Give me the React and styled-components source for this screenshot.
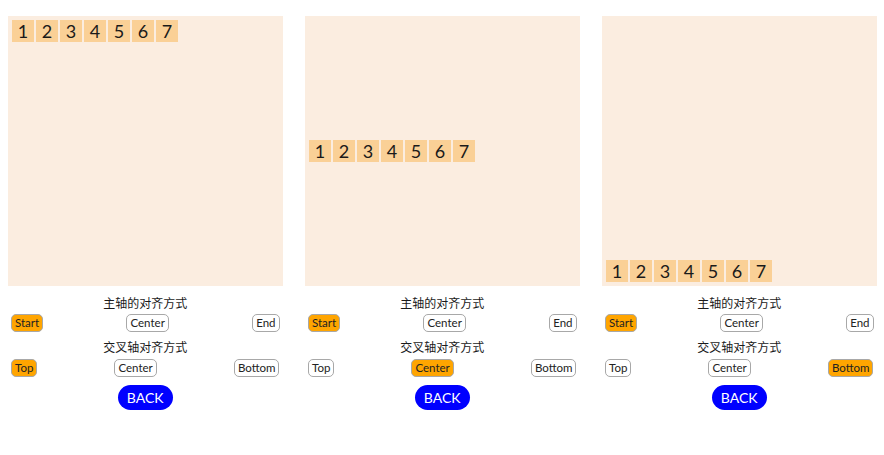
import React from "react";
import styled, { createGlobalStyle } from "styled-components";

const GlobalStyle = createGlobalStyle`
  body {
    margin: 0;
    background: #ffffff;
    font-family: Lato, "Noto Sans CJK SC", sans-serif;
  }
`;

const ITEMS = [1, 2, 3, 4, 5, 6, 7];

const DEMOS = [
  { main: "Start", cross: "Top", align: "flex-start" },
  { main: "Start", cross: "Center", align: "center" },
  { main: "Start", cross: "Bottom", align: "flex-end" },
];

const App = () => {
  return (
    <Page>
      <GlobalStyle />
      {DEMOS.map((demo, i) => (
        <Column key={i}>
          <Stage align={demo.align}>
            {ITEMS.map((n) => (
              <Item key={n}>{n}</Item>
            ))}
          </Stage>
          <Title>主轴的对齐方式</Title>
          <ButtonRow>
            {["Start", "Center", "End"].map((label) => (
              <Option key={label} active={demo.main === label}>
                {label}
              </Option>
            ))}
          </ButtonRow>
          <Title gap="8">交叉轴对齐方式</Title>
          <ButtonRow gap="3">
            {["Top", "Center", "Bottom"].map((label) => (
              <Option key={label} active={demo.cross === label}>
                {label}
              </Option>
            ))}
          </ButtonRow>
          <BackButton>BACK</BackButton>
        </Column>
      ))}
    </Page>
  );
};

const Page = styled.div`
  display: flex;
  gap: 22.5px;
  padding: 16px 0px 0px 8px;
`;

const Column = styled.div`
  width: 274.5px;
  display: flex;
  flex-direction: column;
  align-items: center;
`;

const Stage = styled.div`
  width: 100%;
  height: 270px;
  box-sizing: border-box;
  padding: 3px;
  background-color: #fbede0;
  display: flex;
  flex-direction: row;
  justify-content: flex-start;
  align-items: ${(props) => props.align};
`;

const Item = styled.div`
  width: 22px;
  height: 22px;
  margin: 1px;
  background-color: #fad096;
  color: #1a1a1a;
  font-size: 18px;
  line-height: 22px;
  text-align: center;
  flex-shrink: 0;
`;

const Title = styled.div`
  margin-top: ${(props) => props.gap || 10}px;
  font-size: 12px;
  line-height: 16px;
  color: #1a1a1a;
`;

const ButtonRow = styled.div`
  margin-top: ${(props) => props.gap || 2}px;
  width: 100%;
  box-sizing: border-box;
  padding: 0px 3px;
  display: flex;
  justify-content: space-between;
`;

const Option = styled.div`
  height: 18px;
  box-sizing: border-box;
  padding: 0px 3px;
  border: 1px solid #a8a8a8;
  border-radius: 5px;
  background-color: ${(props) => (props.active ? "#ffa500" : "#ffffff")};
  color: #222;
  font-size: 11.5px;
  line-height: 16px;
`;

const BackButton = styled.div`
  margin-top: 8px;
  width: 55px;
  height: 25px;
  border-radius: 13px;
  background-color: #0000ff;
  color: #ffffff;
  font-size: 14px;
  line-height: 25px;
  text-align: center;
`;

export default App;
